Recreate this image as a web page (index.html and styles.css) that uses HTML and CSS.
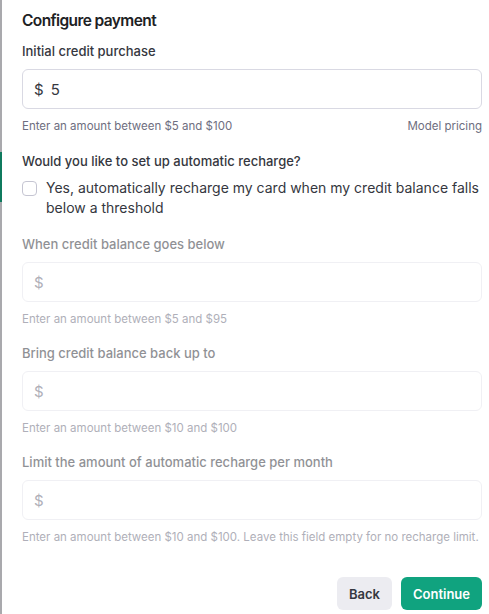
FILE: index.html
```html
<!DOCTYPE html>
<html>
<head>
<meta charset="utf-8">
<link rel="stylesheet" href="styles.css">
</head>
<body>
<div class="page">
  <div class="backdrop"><span class="bd-green"></span></div>
  <div class="modal">
    <h1 class="title">Configure payment</h1>
    <div class="field">
      <div class="label">Initial credit purchase</div>
      <div class="input"><span class="cur">$</span><span class="val">5</span></div>
      <div class="help-row"><span class="help">Enter an amount between $5 and $100</span><span class="help">Model pricing</span></div>
    </div>
    <div class="question">Would you like to set up automatic recharge?</div>
    <label class="check-row"><span class="checkbox"></span><span class="check-text">Yes, automatically recharge my card when my credit balance falls below a threshold</span></label>
    <div class="disabled">
      <div class="field">
        <div class="label">When credit balance goes below</div>
        <div class="input"><span class="cur">$</span></div>
        <div class="help">Enter an amount between $5 and $95</div>
      </div>
      <div class="field">
        <div class="label">Bring credit balance back up to</div>
        <div class="input"><span class="cur">$</span></div>
        <div class="help">Enter an amount between $10 and $100</div>
      </div>
      <div class="field">
        <div class="label">Limit the amount of automatic recharge per month</div>
        <div class="input"><span class="cur">$</span></div>
        <div class="help">Enter an amount between $10 and $100. Leave this field empty for no recharge limit.</div>
      </div>
    </div>
    <div class="actions">
      <button class="btn btn-back">Back</button>
      <button class="btn btn-primary">Continue</button>
    </div>
  </div>
</div>
</body>
</html>
```
FILE: styles.css
```css
* { box-sizing: border-box; }
html, body { margin: 0; padding: 0; background: #fff; }
body { font-family: Inter, "Noto Sans", sans-serif; color: #202123; }
.page { display: flex; width: 489px; height: 614px; overflow: hidden; }
.backdrop { width: 2px; flex: none; background: #a9a9ad; display: flex; flex-direction: column; }
.bd-green { margin-top: 152px; height: 50px; background: #0f7a5e; }
.modal { flex: 1; padding: 8px 7px 0 20px; display: flex; flex-direction: column; }
.title { margin: 0; font-size: 15.5px; font-weight: 600; line-height: 25px; letter-spacing: -0.6px; }
.field { display: flex; flex-direction: column; }
.label { font-size: 13px; font-weight: 500; color: #353740; line-height: 18px; margin-top: 9px; }
.input { margin-top: 9px; height: 40px; border: 1px solid #d9d9e3; border-radius: 6px; display: flex; align-items: center; padding: 0 11px; font-size: 15px; color: #353740; gap: 7px; }
.help-row { display: flex; justify-content: space-between; }
.help { font-size: 11.5px; color: #6e6e80; margin-top: 10px; line-height: 14px; }
.question { font-size: 13px; font-weight: 500; color: #353740; line-height: 18px; margin-top: 19px; }
.check-row { display: flex; gap: 9px; margin-top: 8px; }
.checkbox { width: 15px; height: 15px; flex: none; border: 1px solid #c5c5d2; border-radius: 4px; margin-top: 3px; }
.check-text { font-size: 14px; line-height: 20px; color: #353740; }
.disabled { opacity: 0.55; margin-top: 17px; display: flex; flex-direction: column; gap: 18px; }
.disabled .label { margin-top: 0; }
.disabled .input { border-color: #e5e5ec; color: #6e6e80; }
.actions { display: flex; justify-content: flex-end; gap: 9px; margin-top: 33px; }
.btn { font-family: inherit; font-size: 13px; font-weight: 600; border: none; border-radius: 6px; height: 33px; padding: 0 12px; }
.btn-back { background: #ececf1; color: #353740; }
.btn-primary { background: #10a37f; color: #fff; }
```
